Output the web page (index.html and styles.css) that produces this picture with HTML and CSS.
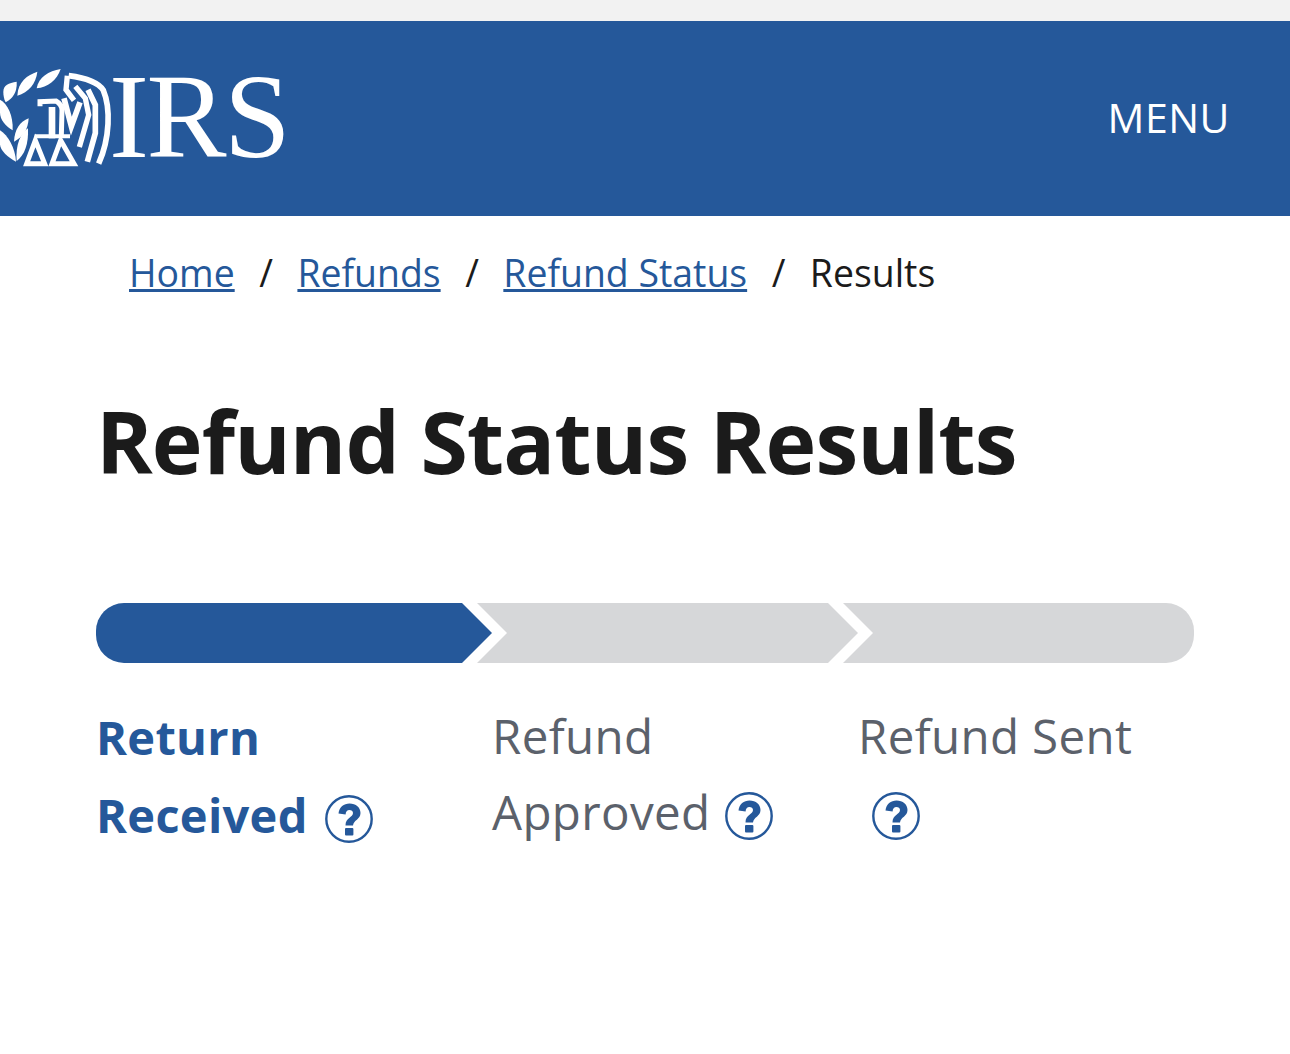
FILE: index.html
```html
<!DOCTYPE html>
<html lang="en">
<head>
  <meta charset="UTF-8">
  <title>Refund Status Results</title>
  <link rel="stylesheet" href="styles.css">
</head>
<body>
  <header class="site-header">
    <a class="logo" href="#">
      <svg class="seal" viewBox="0 0 336 315" aria-hidden="true">
        <!-- laurel -->
        <g fill="#fff">
          <path d="M182 12 C146 18 116 36 110 70 C142 68 172 44 182 12 Z"/>
          <path d="M112 20 C82 30 54 50 52 92 C86 82 108 56 112 20 Z"/>
          <path d="M50 50 C26 54 10 60 10 80 C10 92 12 102 17 112 C38 100 52 82 50 50 Z"/>
          <path d="M0 104 C22 116 40 150 38 196 C18 184 0 166 0 142 Z"/>
          <path d="M86 160 C60 170 44 192 42 230 C68 216 84 196 86 160 Z"/>
          <path d="M0 196 C24 210 46 250 48 290 C24 278 0 256 0 238 Z"/>
          <path d="M84 190 C62 204 46 240 50 288 C74 270 86 238 84 190 Z"/>
        </g>
        <!-- eagle -->
        <g fill="none" stroke="#fff" stroke-linejoin="miter">
          <path d="M206 32 C250 38 294 50 310 76 C332 128 330 220 296 296" stroke-width="17"/>
          <path d="M202 32 L198 74 L222 106" stroke-width="16"/>
          <path d="M192 100 L214 184 L240 112" stroke-width="17"/>
          <path d="M226 64 L256 100 L266 150 L238 246" stroke-width="16"/>
          <path d="M264 74 L286 120 L286 204 L262 290" stroke-width="17"/>
          <path d="M120 124 L120 110 L168 108 C182 116 186 124 186 136 L184 212" stroke-width="15"/>
          <path d="M156 126 L156 220" stroke-width="20"/>
          <path d="M104 214 L210 214" stroke-width="12"/>
          <path d="M106 226 L80 296 L134 296 Z" stroke-width="15"/>
          <path d="M182 226 L156 296 L222 296 Z" stroke-width="15"/>
        </g>
      </svg>
      <span class="logo-text">IRS</span>
    </a>
    <a class="menu" href="#">MENU</a>
  </header>

  <nav class="breadcrumb">
    <a href="#">Home</a>
    <span class="sep">/</span>
    <a href="#">Refunds</a>
    <span class="sep">/</span>
    <a href="#">Refund Status</a>
    <span class="sep">/</span>
    <span>Results</span>
  </nav>

  <main class="content">
    <h1>Refund Status Results</h1>

    <div class="tracker">
      <div class="bar bar-first"></div>
      <div class="bar bar-mid"></div>
      <div class="bar bar-last"></div>
    </div>

    <div class="steps">
      <div class="step step-done">
        <span class="step-word">Return</span>
        <span class="step-word">Received <svg class="help" viewBox="0 0 48 48"><use href="#q"/></svg></span>
      </div>
      <div class="step">
        <span class="step-word">Refund</span>
        <span class="step-word">Approved <svg class="help" viewBox="0 0 48 48"><use href="#q"/></svg></span>
      </div>
      <div class="step">
        <span class="step-word">Refund Sent</span>
        <span class="step-word step-icon-only"><svg class="help" viewBox="0 0 48 48"><use href="#q"/></svg></span>
      </div>
    </div>
  </main>

  <svg class="defs" aria-hidden="true">
    <symbol id="q" viewBox="0 0 48 48">
      <circle cx="24" cy="24" r="22.7" fill="#fff" stroke="#25589a" stroke-width="2.4"/>
      <path d="M13.5 18.5 C14 12 19 8.5 24.5 8.5 C31 8.5 35.5 12.5 35.5 18 C35.5 24.5 28.5 25 28 30.5 L20.5 30.5 C20.5 22.5 28 22.5 28 18 C28 16 26.4 15 24.4 15 C22 15 20.8 16.6 20.6 19.5 Z" fill="#25589a"/>
      <rect x="20" y="33" width="8.4" height="7.5" rx="1" fill="#25589a"/>
    </symbol>
  </svg>
</body>
</html>
```

FILE: styles.css
```css
body {
  margin: 0;
  background: #fff;
  color: #1b1b1b;
  font-family: "Open Sans", "Noto Sans", Arial, sans-serif;
}

.site-header {
  margin-top: 21px;
  height: 195px;
  background: #25589a;
  box-shadow: 0 -21px 0 #f2f2f2;
  display: flex;
  align-items: center;
  justify-content: space-between;
  padding-right: 60px;
}

.logo {
  display: flex;
  align-items: center;
  color: #fff;
  text-decoration: none;
}

.seal {
  width: 112px;
  height: 105px;
  flex: none;
  margin-top: -2px;
}

.logo-text {
  margin: -3px 0 0 -3px;
  font-family: "Liberation Serif", serif;
  font-size: 120px;
  line-height: 1;
  letter-spacing: -2.5px;
}

.menu {
  margin-top: -4px;
  color: #fff;
  text-decoration: none;
  font-size: 41px;
  letter-spacing: 0.5px;
}

.breadcrumb {
  display: flex;
  align-items: center;
  gap: 24.5px;
  padding: 32px 0 0 129px;
  font-size: 37.4px;
  line-height: 50px;
}

.breadcrumb a {
  color: #25589a;
}

.content {
  padding: 0 96px;
}

h1 {
  margin: 93px 0 0 0;
  font-size: 86px;
  line-height: 100px;
  font-weight: 700;
  letter-spacing: -0.9px;
}

.tracker {
  display: flex;
  margin-top: 112px;
  height: 60px;
}

.bar {
  height: 60px;
  background: #d6d7d9;
  flex: none;
}

.bar-first {
  width: 396px;
  background: #25589a;
  border-radius: 28px 0 0 28px;
  clip-path: polygon(0 0, 366px 0, 100% 50%, 366px 100%, 0 100%);
}

.bar-mid {
  width: 381px;
  margin-left: -15px;
  clip-path: polygon(0 0, 351px 0, 100% 50%, 351px 100%, 0 100%, 30px 50%);
}

.bar-last {
  width: 351px;
  margin-left: -15px;
  border-radius: 0 28px 28px 0;
  clip-path: polygon(0 0, 100% 0, 100% 100%, 0 100%, 30px 50%);
}

.steps {
  display: grid;
  grid-template-columns: 396px 366px 1fr;
  margin-top: 35px;
  color: #5b616b;
  font-size: 47.5px;
  letter-spacing: 0.35px;
}

.step-word {
  display: block;
  height: 76px;
  line-height: 76px;
}

.step-done {
  color: #25589a;
  font-size: 47px;
  font-weight: 700;
  letter-spacing: 0.3px;
}

.step-done .step-word {
  height: 78px;
  line-height: 78px;
}

.help {
  width: 48px;
  height: 48px;
  vertical-align: -10px;
  margin-left: 2px;
}

.step-done .help {
  margin-left: 5px;
}

.step-icon-only {
  padding-left: 12px;
}

.defs {
  display: none;
}
```
